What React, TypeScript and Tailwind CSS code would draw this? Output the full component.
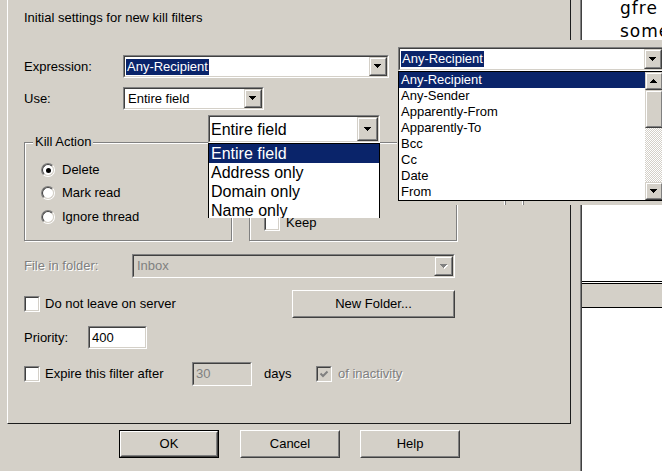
import React from 'react';

// Win2000-style dialog with two dropped-open combo boxes pasted on top

function Sunken({ className = '', bg = 'bg-white', children }: { className?: string; bg?: string; children?: React.ReactNode }) {
  return (
    <div className={`shrink-0 border border-t-[#808080] border-l-[#808080] border-b-white border-r-white ${className}`}>
      <div className={`flex h-full w-full items-center border border-t-[#404040] border-l-[#404040] border-b-[#d4d0c8] border-r-[#d4d0c8] ${bg}`}>
        {children}
      </div>
    </div>
  );
}

function Arrow({ disabled, up }: { disabled?: boolean; up?: boolean }) {
  return (
    <svg width="8" height="5" viewBox="0 0 8 5" className="block" shapeRendering="crispEdges">
      {disabled && <polygon points="1,1 8,1 4.5,5" fill="#fff" />}
      <polygon points={up ? '0,4 7,4 3.5,0' : '0,0 7,0 3.5,4'} fill={disabled ? '#808080' : '#000'} />
    </svg>
  );
}

function RaisedSmall({ className = '', children }: { className?: string; children?: React.ReactNode }) {
  return (
    <div className={`shrink-0 border border-t-[#d4d0c8] border-l-[#d4d0c8] border-b-[#404040] border-r-[#404040] bg-[#d4d0c8] ${className}`}>
      <div className="flex h-full w-full items-center justify-center border border-t-white border-l-white border-b-[#808080] border-r-[#808080]">
        {children}
      </div>
    </div>
  );
}

function Combo({
  className,
  text,
  selected,
  disabled,
  textClass = '',
  btnClass = 'h-full w-[18px]',
}: {
  className: string;
  text: string;
  selected?: boolean;
  disabled?: boolean;
  textClass?: string;
  btnClass?: string;
}) {
  return (
    <Sunken className={className} bg={disabled ? 'bg-[#d4d0c8]' : 'bg-white'}>
      <div className="flex h-full w-full items-center justify-between">
        <span
          className={`${textClass} ${selected ? 'bg-[#0a246a] px-[1px] text-white' : ''} ${disabled ? 'text-[#808080]' : ''}`}
        >
          {text}
        </span>
        <RaisedSmall className={btnClass}>
          <Arrow disabled={disabled} />
        </RaisedSmall>
      </div>
    </Sunken>
  );
}

function Check({ checked, disabled }: { checked?: boolean; disabled?: boolean }) {
  return (
    <Sunken className="h-[16px] w-[16px]" bg={disabled ? 'bg-[#d4d0c8]' : 'bg-white'}>
      {checked && (
        <svg width="12" height="12" viewBox="0 0 12 12" className="block">
          <path d="M2.5 5.5 L5 8 L9.5 3.5" fill="none" stroke={disabled ? '#808080' : '#000'} strokeWidth="2" />
        </svg>
      )}
    </Sunken>
  );
}

function Radio({ checked }: { checked?: boolean }) {
  return (
    <div className="h-[14px] w-[14px] shrink-0 rounded-full border border-t-[#808080] border-l-[#808080] border-b-white border-r-white">
      <div className="flex h-full w-full items-center justify-center rounded-full border border-t-[#404040] border-l-[#404040] border-b-[#d4d0c8] border-r-[#d4d0c8] bg-white">
        {checked && <div className="h-[5px] w-[5px] rounded-full bg-black" />}
      </div>
    </div>
  );
}

function Button({ className = '', def, children }: { className?: string; def?: boolean; children: React.ReactNode }) {
  return (
    <div className={`shrink-0 ${def ? 'border border-black' : ''} ${className}`}>
      <div className="h-full w-full border border-t-white border-l-white border-b-[#404040] border-r-[#404040]">
        <div className="flex h-full w-full items-center justify-center border border-t-[#d4d0c8] border-l-[#d4d0c8] border-b-[#808080] border-r-[#808080]">
          {children}
        </div>
      </div>
    </div>
  );
}

const disabledText = 'text-[#808080] [text-shadow:1px_1px_0_#fff]';

const headers = ['Any-Recipient', 'Any-Sender', 'Apparently-From', 'Apparently-To', 'Bcc', 'Cc', 'Date', 'From'];
const parts = ['Entire field', 'Address only', 'Domain only', 'Name only'];

export default function App() {
  return (
    <div className="relative flex h-[471px] w-[662px] overflow-hidden bg-[#d4d0c8] font-['Liberation_Sans',Arial,sans-serif] text-[13px] leading-[16px] text-black">
      {/* Dialog */}
      <div className="flex w-[580px] shrink-0 flex-col">
        <div className="ml-[7px] flex h-[424px] w-[564px] flex-col border-b border-l border-r border-b-[#1c1c1c] border-l-white border-r-[#1c1c1c] pl-[16px] pt-[10px]">
          <div className="h-[16px]">Initial settings for new kill filters</div>

          <div className="mt-[29px] flex h-[23px] items-center">
            <span className="w-[99px]">Expression:</span>
            <Combo className="h-[23px] w-[266px]" text="Any-Recipient" selected textClass="ml-[1px]" />
          </div>

          <div className="mt-[9px] flex h-[23px] items-center">
            <span className="w-[99px]">Use:</span>
            <Combo className="h-[23px] w-[141px]" text="Entire field" textClass="ml-[3px]" />
          </div>

          <div className="mt-[32px] flex h-[99px] gap-[17px]">
            <div className="flex w-[208px] flex-col border border-[#808080] pl-[16px] shadow-[inset_1px_1px_0_#fff,1px_1px_0_#fff]">
              <span className="-ml-[8px] -mt-[9px] w-fit bg-[#d4d0c8] px-[2px]">Kill Action</span>
              <div className="mt-[12px] flex h-[16px] items-center gap-[7px]">
                <Radio checked />
                <span>Delete</span>
              </div>
              <div className="mt-[7px] flex h-[16px] items-center gap-[7px]">
                <Radio />
                <span>Mark read</span>
              </div>
              <div className="mt-[8px] flex h-[16px] items-center gap-[7px]">
                <Radio />
                <span>Ignore thread</span>
              </div>
            </div>
            <div className="flex w-[208px] flex-col border border-[#808080] pl-[14px] shadow-[inset_1px_1px_0_#fff,1px_1px_0_#fff]">
              <div className="mt-[72px] flex h-[16px] items-center gap-[6px]">
                <Check />
                <span>Keep</span>
              </div>
            </div>
          </div>

          <div className="mt-[13px] flex h-[24px] items-center">
            <span className={`w-[108px] ${disabledText}`}>File in folder:</span>
            <Combo className="h-[24px] w-[323px]" text="Inbox" disabled textClass="ml-[3px]" btnClass="h-full w-[19px]" />
          </div>

          <div className="mt-[12px] flex h-[28px] w-[431px] items-center">
            <Check />
            <span className="ml-[5px]">Do not leave on server</span>
            <Button className="ml-auto h-[28px] w-[163px]">New Folder...</Button>
          </div>

          <div className="mt-[8px] flex h-[23px] items-center">
            <span className="w-[64px]">Priority:</span>
            <Sunken className="h-[23px] w-[59px]">
              <span className="ml-[2px]">400</span>
            </Sunken>
          </div>

          <div className="mt-[13px] flex h-[24px] items-center">
            <div className="flex w-[168px] items-center">
              <Check />
              <span className="ml-[5px]">Expire this filter after</span>
            </div>
            <Sunken className="h-[24px] w-[60px]" bg="bg-[#d4d0c8]">
              <span className="ml-[2px] text-[#808080]">30</span>
            </Sunken>
            <span className="ml-[12px] w-[52px]">days</span>
            <Check checked disabled />
            <span className={`ml-[6px] ${disabledText}`}>of inactivity</span>
          </div>
        </div>

        <div className="mt-[6px] flex pl-[119px]">
          <Button def className="h-[28px] w-[100px]">OK</Button>
          <Button className="ml-[21px] h-[28px] w-[100px]">Cancel</Button>
          <Button className="ml-[20px] h-[28px] w-[100px]">Help</Button>
        </div>
      </div>

      {/* Window behind, on the right */}
      <div className="flex w-[82px] shrink-0 flex-col border-l border-[#808080]">
        <div className="flex flex-1 flex-col border-l border-[#404040] bg-white">
          <div className="h-[281px] overflow-hidden pl-[38px] font-['DejaVu_Sans',sans-serif] text-[17px] leading-[23px] tracking-[1px] whitespace-nowrap">
            <div className="-mt-[3px]">gfre</div>
            <div>some</div>
          </div>
          <div className="h-[1px] bg-black" />
          <div className="h-[1px] bg-white" />
          <div className="h-[1px] bg-black" />
          <div className="h-[23px] bg-[#d4d0c8]" />
          <div className="h-[1px] bg-black" />
        </div>
      </div>

      {/* Dropped-down header list */}
      <div className="absolute left-[397px] top-[40px] flex h-[165px] w-[270px] flex-col bg-[#d4d0c8] pl-[1px] pt-[7px]">
        <Combo className="h-[24px] w-[266px]" text="Any-Recipient" selected textClass="ml-[1px]" />
        <div className="flex h-[130px] w-[266px] border border-black bg-white">
          <div className="flex-1">
            {headers.map((h, i) => (
              <div
                key={h}
                className={`h-[16px] pl-[2px] leading-[16px] ${i === 0 ? 'bg-[#0a246a] text-white' : ''}`}
              >
                {h}
              </div>
            ))}
          </div>
          <div className="flex w-[18px] flex-col">
            <RaisedSmall className="h-[18px] w-full">
              <Arrow up />
            </RaisedSmall>
            <RaisedSmall className="h-[38px] w-full" />
            <div className="flex-1 bg-[repeating-conic-gradient(#fff_0_25%,#d4d0c8_0_50%)] bg-[length:2px_2px]" />
            <RaisedSmall className="h-[18px] w-full">
              <Arrow />
            </RaisedSmall>
          </div>
        </div>
        <div className="flex h-[4px]">
          <div className="ml-[106px] w-[1px] bg-white" />
          <div className="w-[1px] bg-[#808080]" />
          <div className="ml-[16px] w-[1px] bg-white" />
          <div className="w-[1px] bg-[#808080]" />
        </div>
      </div>

      {/* Dropped-down "Use" list */}
      <div className="absolute left-[208px] top-[115px] flex h-[103px] w-[172px] flex-col overflow-hidden text-[16px] leading-[19px]">
        <Combo className="h-[28px] w-[172px]" text="Entire field" textClass="ml-[1px]" btnClass="h-full w-[21px]" />
        <div className="flex-1 border-l border-r border-t border-black bg-white">
          {parts.map((p, i) => (
            <div key={p} className={`h-[19px] pl-[2px] ${i === 0 ? 'bg-[#0a246a] text-white' : ''}`}>
              {p}
            </div>
          ))}
        </div>
      </div>
    </div>
  );
}
